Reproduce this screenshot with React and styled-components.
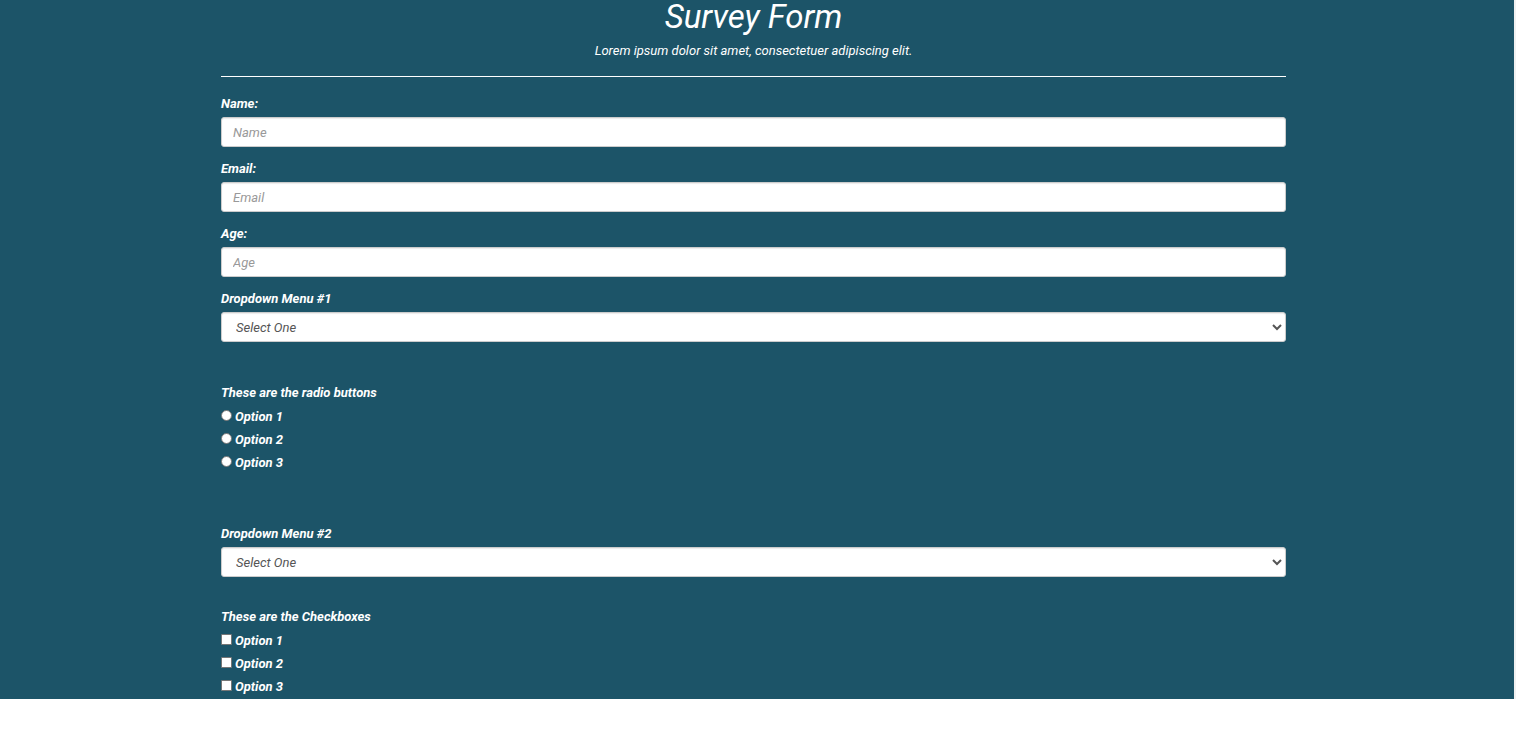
import React from "react";
import styled, { createGlobalStyle } from "styled-components";

const GlobalStyle = createGlobalStyle`
  *, *::before, *::after { box-sizing: border-box; }
  body {
    margin: 0;
    background: #fff;
    font-family: Roboto, "Liberation Sans", sans-serif;
    font-size: 13px;
    font-style: italic;
    line-height: 18px;
    color: #fff;
  }
`;

const Page = styled.main`
  margin-right: 19px;
  padding: 0 228px 3px 221px;
  background: #1c5468;
  border-right: 2px solid #f1f1f1;
`;

const Header = styled.header`
  display: flex;
  flex-direction: column;
  gap: 8px;
  padding-bottom: 16px;
  border-bottom: 1px solid #fff;
  text-align: center;
`;

const Title = styled.h1`
  margin: 0;
  font-size: 33px;
  font-weight: 400;
  line-height: 34px;
`;

const Subtitle = styled.p`
  margin: 0;
`;

const Form = styled.form`
  display: flex;
  flex-direction: column;
  padding-top: 18px;
`;

const Field = styled.div`
  display: flex;
  flex-direction: column;
  gap: 4px;
  margin-bottom: ${({ $after }) => $after || 13}px;
`;

const Label = styled.label`
  font-weight: 700;
`;

const controlStyles = `
  width: 100%;
  height: 30px;
  border: 1px solid #ccc;
  border-radius: 3px;
  background-color: #fff;
  box-shadow: inset 0 1px 1px rgba(0, 0, 0, 0.08);
  color: #555;
  font: inherit;
`;

const TextInput = styled.input`
  ${controlStyles}
  padding: 5px 11px;
  &::placeholder { color: #999; opacity: 1; }
`;

const Select = styled.select`
  ${controlStyles}
  padding: 5px 10px;
`;

const Group = styled.fieldset`
  display: flex;
  flex-direction: column;
  gap: 5px;
  min-width: 0;
  margin: 0 0 ${({ $after }) => $after || 0}px;
  padding: 0;
  border: 0;
`;

const Legend = styled.legend`
  margin-bottom: 6px;
  padding: 0;
  font-weight: 700;
`;

const Choice = styled.label`
  display: flex;
  align-items: flex-start;
  gap: 3px;
  font-weight: 700;
`;

const Mark = styled.input`
  appearance: none;
  flex: none;
  width: 11px;
  height: 11px;
  margin: 2px 0 0;
  border: 1px solid #767676;
  border-radius: ${({ type }) => (type === "radio" ? "50%" : "1px")};
  background: #fff;
  &:checked { background: #1c5468; box-shadow: inset 0 0 0 2px #fff; }
`;

const options = ["Option 1", "Option 2", "Option 3"];

function TextField({ id, label, type = "text" }) {
  return (
    <Field>
      <Label htmlFor={id}>{label}:</Label>
      <TextInput id={id} name={id} type={type} placeholder={label} />
    </Field>
  );
}

function SelectField({ id, label, after }) {
  return (
    <Field $after={after}>
      <Label htmlFor={id}>{label}</Label>
      <Select id={id} name={id} defaultValue="">
        <option value="">Select One</option>
        {options.map((option) => (
          <option key={option}>{option}</option>
        ))}
      </Select>
    </Field>
  );
}

function ChoiceGroup({ legend, type, name, after }) {
  return (
    <Group $after={after}>
      <Legend>{legend}</Legend>
      {options.map((option) => (
        <Choice key={option}>
          <Mark type={type} name={name} value={option} />
          {option}
        </Choice>
      ))}
    </Group>
  );
}

export default function App() {
  return (
    <>
      <GlobalStyle />
      <Page>
        <Header>
          <Title>Survey Form</Title>
          <Subtitle>Lorem ipsum dolor sit amet, consectetuer adipiscing elit.</Subtitle>
        </Header>
        <Form>
          <TextField id="name" label="Name" />
          <TextField id="email" label="Email" type="email" />
          <TextField id="age" label="Age" />
          <SelectField id="dropdown-1" label="Dropdown Menu #1" after={42} />
          <ChoiceGroup legend="These are the radio buttons" type="radio" name="radio" after={53} />
          <SelectField id="dropdown-2" label="Dropdown Menu #2" after={31} />
          <ChoiceGroup legend="These are the Checkboxes" type="checkbox" name="checkbox" />
        </Form>
      </Page>
    </>
  );
}
